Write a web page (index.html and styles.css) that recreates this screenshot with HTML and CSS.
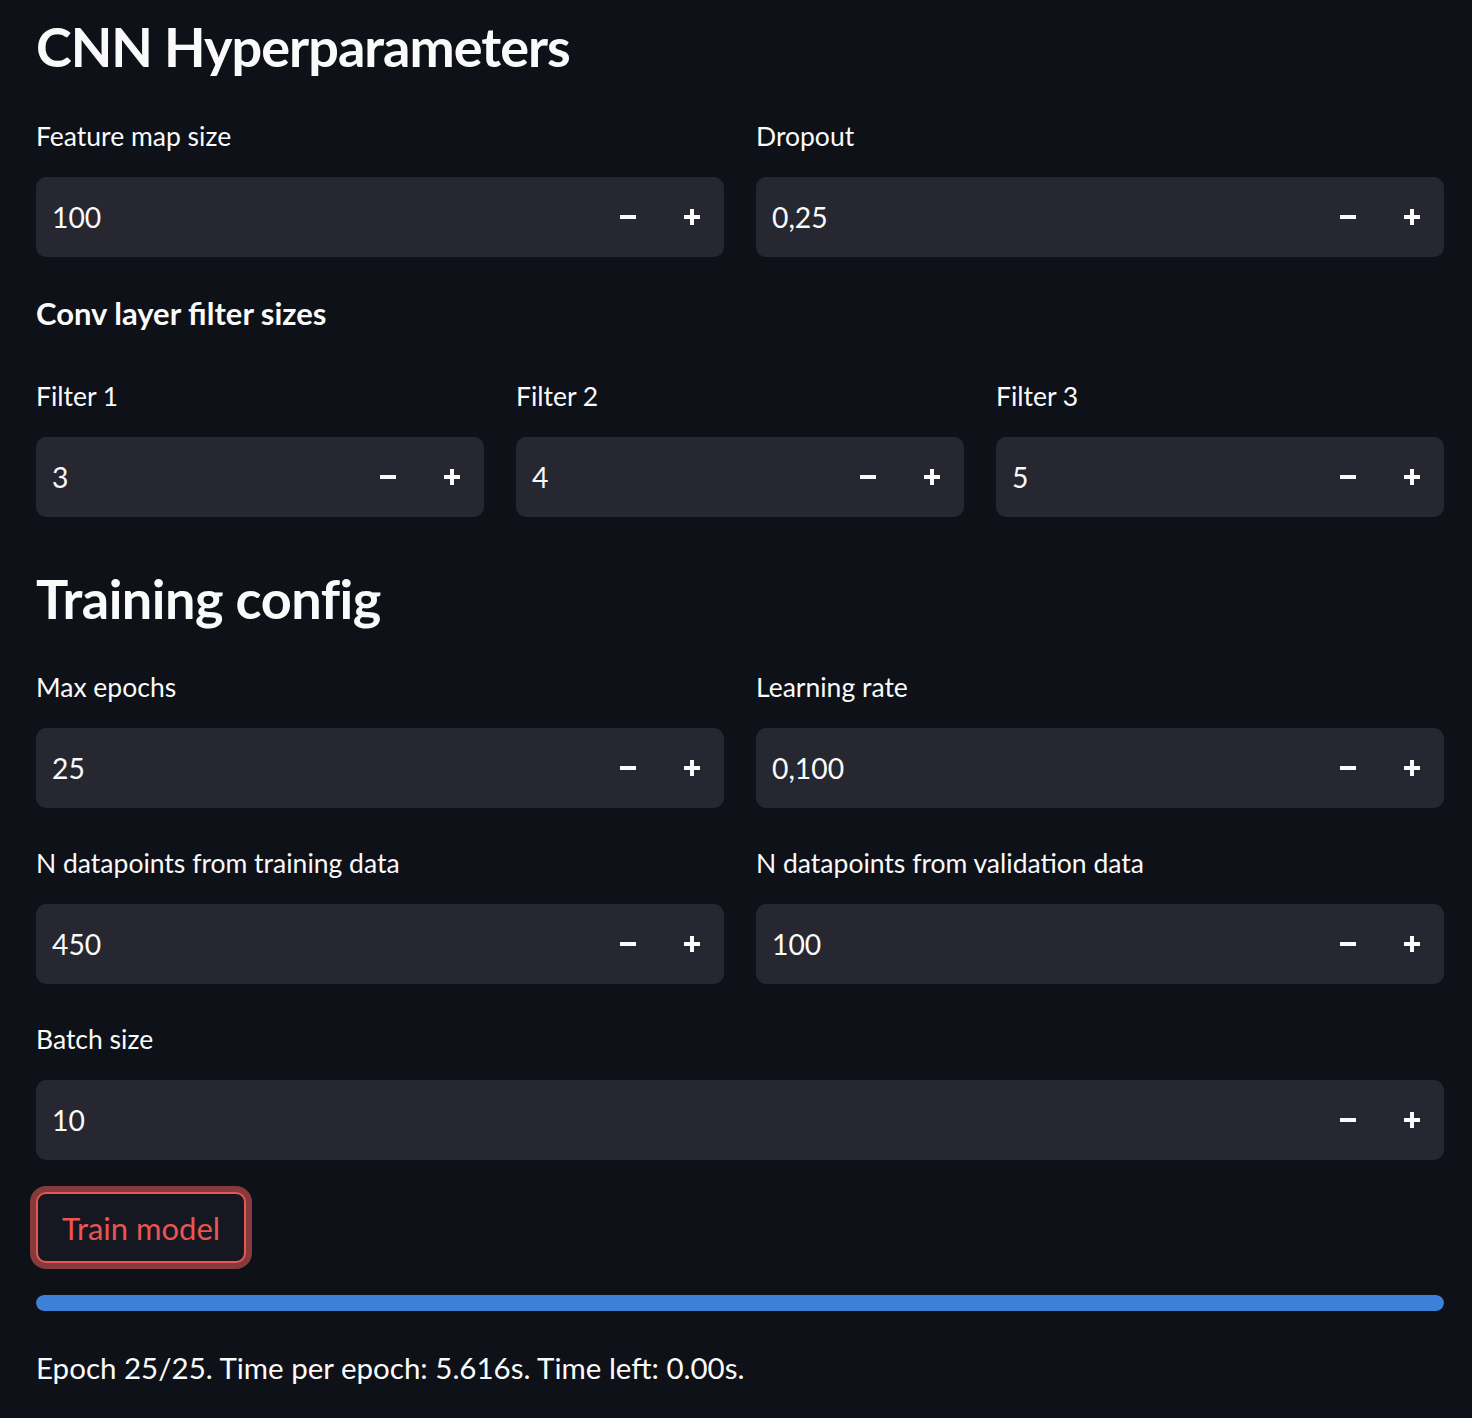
FILE: index.html
```html
<!DOCTYPE html>
<html lang="en">
<head>
<meta charset="utf-8">
<title>CNN Hyperparameters</title>
<link rel="stylesheet" href="styles.css">
</head>
<body>
<main class="main">
  <h1 class="heading first">CNN Hyperparameters</h1>

  <div class="cols cols-2">
    <div class="widget">
      <label class="label">Feature map size</label>
      <div class="num">
        <span class="num-value">100</span>
        <button class="step" aria-label="decrement"><svg width="16" height="16" viewBox="0 0 16 16"><rect x="0" y="6" width="16" height="4" fill="#fafafa"/></svg></button>
        <button class="step" aria-label="increment"><svg width="16" height="16" viewBox="0 0 16 16"><rect x="0" y="6" width="16" height="4" fill="#fafafa"/><rect x="6" y="0" width="4" height="16" fill="#fafafa"/></svg></button>
      </div>
    </div>
    <div class="widget">
      <label class="label">Dropout</label>
      <div class="num">
        <span class="num-value">0,25</span>
        <button class="step" aria-label="decrement"><svg width="16" height="16" viewBox="0 0 16 16"><rect x="0" y="6" width="16" height="4" fill="#fafafa"/></svg></button>
        <button class="step" aria-label="increment"><svg width="16" height="16" viewBox="0 0 16 16"><rect x="0" y="6" width="16" height="4" fill="#fafafa"/><rect x="6" y="0" width="4" height="16" fill="#fafafa"/></svg></button>
      </div>
    </div>
  </div>

  <p class="subtitle">Conv layer filter sizes</p>

  <div class="cols cols-3">
    <div class="widget">
      <label class="label">Filter 1</label>
      <div class="num">
        <span class="num-value">3</span>
        <button class="step" aria-label="decrement"><svg width="16" height="16" viewBox="0 0 16 16"><rect x="0" y="6" width="16" height="4" fill="#fafafa"/></svg></button>
        <button class="step" aria-label="increment"><svg width="16" height="16" viewBox="0 0 16 16"><rect x="0" y="6" width="16" height="4" fill="#fafafa"/><rect x="6" y="0" width="4" height="16" fill="#fafafa"/></svg></button>
      </div>
    </div>
    <div class="widget">
      <label class="label">Filter 2</label>
      <div class="num">
        <span class="num-value">4</span>
        <button class="step" aria-label="decrement"><svg width="16" height="16" viewBox="0 0 16 16"><rect x="0" y="6" width="16" height="4" fill="#fafafa"/></svg></button>
        <button class="step" aria-label="increment"><svg width="16" height="16" viewBox="0 0 16 16"><rect x="0" y="6" width="16" height="4" fill="#fafafa"/><rect x="6" y="0" width="4" height="16" fill="#fafafa"/></svg></button>
      </div>
    </div>
    <div class="widget">
      <label class="label">Filter 3</label>
      <div class="num">
        <span class="num-value">5</span>
        <button class="step" aria-label="decrement"><svg width="16" height="16" viewBox="0 0 16 16"><rect x="0" y="6" width="16" height="4" fill="#fafafa"/></svg></button>
        <button class="step" aria-label="increment"><svg width="16" height="16" viewBox="0 0 16 16"><rect x="0" y="6" width="16" height="4" fill="#fafafa"/><rect x="6" y="0" width="4" height="16" fill="#fafafa"/></svg></button>
      </div>
    </div>
  </div>

  <h1 class="heading">Training config</h1>

  <div class="cols cols-2">
    <div class="widget">
      <label class="label">Max epochs</label>
      <div class="num">
        <span class="num-value">25</span>
        <button class="step" aria-label="decrement"><svg width="16" height="16" viewBox="0 0 16 16"><rect x="0" y="6" width="16" height="4" fill="#fafafa"/></svg></button>
        <button class="step" aria-label="increment"><svg width="16" height="16" viewBox="0 0 16 16"><rect x="0" y="6" width="16" height="4" fill="#fafafa"/><rect x="6" y="0" width="4" height="16" fill="#fafafa"/></svg></button>
      </div>
    </div>
    <div class="widget">
      <label class="label">Learning rate</label>
      <div class="num">
        <span class="num-value">0,100</span>
        <button class="step" aria-label="decrement"><svg width="16" height="16" viewBox="0 0 16 16"><rect x="0" y="6" width="16" height="4" fill="#fafafa"/></svg></button>
        <button class="step" aria-label="increment"><svg width="16" height="16" viewBox="0 0 16 16"><rect x="0" y="6" width="16" height="4" fill="#fafafa"/><rect x="6" y="0" width="4" height="16" fill="#fafafa"/></svg></button>
      </div>
    </div>
  </div>

  <div class="cols cols-2">
    <div class="widget">
      <label class="label">N datapoints from training data</label>
      <div class="num">
        <span class="num-value">450</span>
        <button class="step" aria-label="decrement"><svg width="16" height="16" viewBox="0 0 16 16"><rect x="0" y="6" width="16" height="4" fill="#fafafa"/></svg></button>
        <button class="step" aria-label="increment"><svg width="16" height="16" viewBox="0 0 16 16"><rect x="0" y="6" width="16" height="4" fill="#fafafa"/><rect x="6" y="0" width="4" height="16" fill="#fafafa"/></svg></button>
      </div>
    </div>
    <div class="widget">
      <label class="label">N datapoints from validation data</label>
      <div class="num">
        <span class="num-value">100</span>
        <button class="step" aria-label="decrement"><svg width="16" height="16" viewBox="0 0 16 16"><rect x="0" y="6" width="16" height="4" fill="#fafafa"/></svg></button>
        <button class="step" aria-label="increment"><svg width="16" height="16" viewBox="0 0 16 16"><rect x="0" y="6" width="16" height="4" fill="#fafafa"/><rect x="6" y="0" width="4" height="16" fill="#fafafa"/></svg></button>
      </div>
    </div>
  </div>

  <div class="widget">
    <label class="label">Batch size</label>
    <div class="num">
      <span class="num-value">10</span>
      <button class="step" aria-label="decrement"><svg width="16" height="16" viewBox="0 0 16 16"><rect x="0" y="6" width="16" height="4" fill="#fafafa"/></svg></button>
      <button class="step" aria-label="increment"><svg width="16" height="16" viewBox="0 0 16 16"><rect x="0" y="6" width="16" height="4" fill="#fafafa"/><rect x="6" y="0" width="4" height="16" fill="#fafafa"/></svg></button>
    </div>
  </div>

  <div class="btn-row">
    <button class="train-btn">Train model</button>
  </div>

  <div class="progress"><div class="progress-fill" style="width:100%"></div></div>

  <p class="status">Epoch 25/25. Time per epoch: 5.616s. Time left: 0.00s.</p>
</main>
</body>
</html>
```
FILE: styles.css
```css
html, body {
  margin: 0;
  padding: 0;
  background: #0e1117;
}
body {
  color: #fafafa;
  font-family: Lato, "Noto Sans", sans-serif;
  font-size: 29.5px;
}
.main {
  display: flex;
  flex-direction: column;
  gap: 32px;
  padding: 0 28px 0 36px;
  height: 1418px;
  box-sizing: border-box;
  overflow: hidden;
}
.heading {
  margin: 0;
  font-size: 54px;
  font-weight: 700;
  letter-spacing: -0.5px;
  line-height: 64px;
  padding: 18px 0 1px;
}
.heading.first {
  padding-top: 15px;
  padding-bottom: 2px;
  letter-spacing: -1px;
}
.subtitle {
  margin: 0 0 3px;
  font-size: 31px;
  font-weight: 700;
  line-height: 49px;
}
.cols {
  display: grid;
  gap: 32px;
}
.cols-2 { grid-template-columns: 1fr 1fr; }
.cols-3 { grid-template-columns: 1fr 1fr 1fr; }
.widget {
  display: flex;
  flex-direction: column;
}
.label {
  display: block;
  font-size: 26.5px;
  line-height: 46px;
  margin-bottom: 18px;
}
.num {
  display: flex;
  align-items: center;
  height: 80px;
  background: #262730;
  border-radius: 10px;
}
.num-value {
  flex: 1;
  padding-left: 16px;
  font-size: 28.3px;
  line-height: 80px;
}
.step {
  width: 64px;
  height: 80px;
  border: 0;
  padding: 0;
  background: transparent;
  display: flex;
  align-items: center;
  justify-content: center;
}
.step svg { display: block; }
.btn-row {
  display: flex;
}
.train-btn {
  height: 71px;
  padding: 0 24px;
  border: 2px solid #ea5552;
  border-radius: 10px;
  background: #151821;
  color: #ea5552;
  font-family: Lato, "Noto Sans", sans-serif;
  font-size: 31px;
  box-shadow: 0 0 0 6px #853a3b;
}
.progress {
  height: 16px;
  border-radius: 8px;
  background: #262730;
  overflow: hidden;
}
.progress-fill {
  height: 100%;
  background: #3d80d9;
  border-radius: 8px;
}
.status {
  margin: 0;
  font-size: 29.5px;
  line-height: 49px;
}
```
